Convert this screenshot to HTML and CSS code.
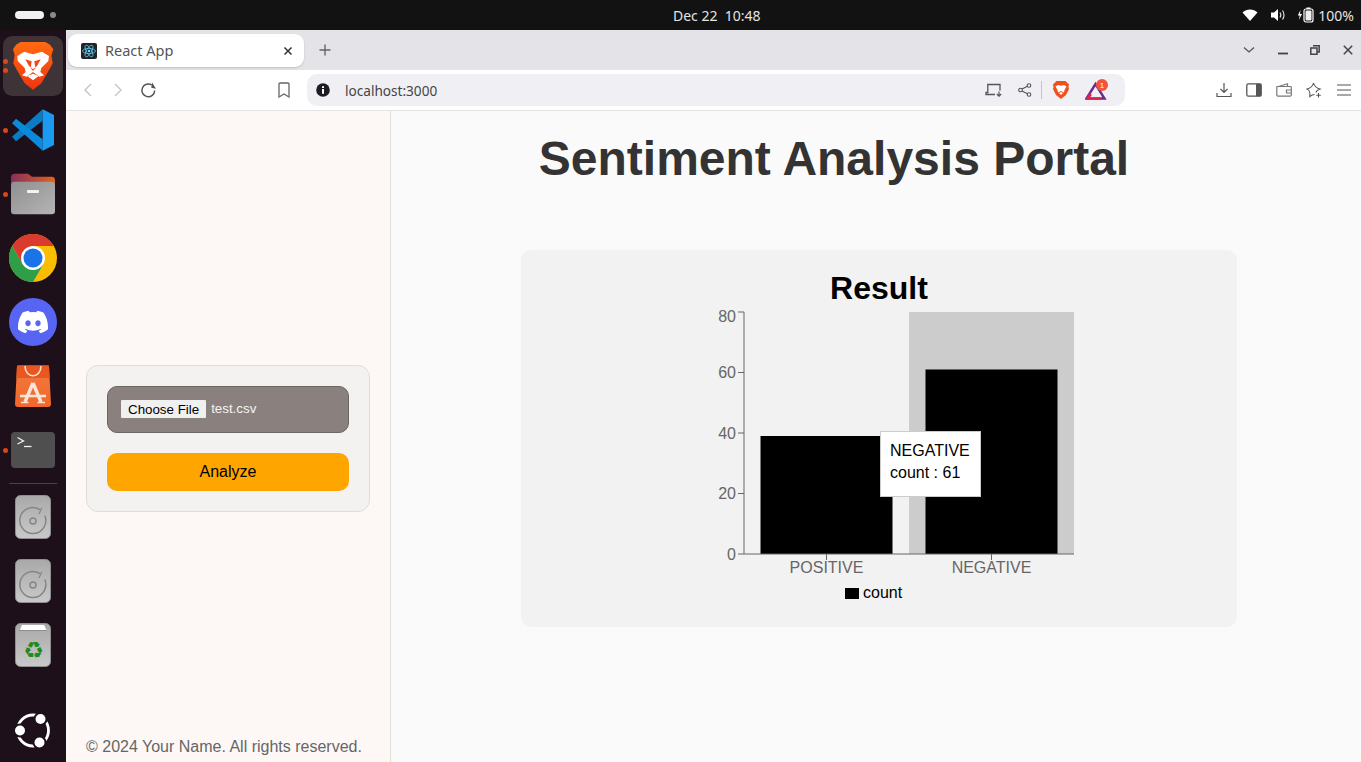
FILE: index.html
```html
<!DOCTYPE html>
<html lang="en">
<head>
<meta charset="utf-8">
<title>React App</title>
<link rel="stylesheet" href="styles.css">
</head>
<body>
<header class="topbar">
  <div class="activities"><span class="pill"></span><span class="wsdot"></span></div>
  <div class="clock">Dec 22&nbsp;&nbsp;10:48</div>
  <div class="status">
    <svg class="st-wifi" width="16" height="14" viewBox="0 0 16 14"><path d="M0.500 4.500C4.500 0.600 11.500 0.600 15.500 4.500L8 13Z" fill="#fff"/></svg>
    <svg class="st-vol" width="16" height="14" viewBox="0 0 16 14"><path d="M1 4.500H4L8 1V13L4 9.500H1Z" fill="#fff"/><path d="M10 4.500C11 6 11 8 10 9.500M12.500 2.500C14.500 5 14.500 9 12.500 11.500" fill="none" stroke="#ddd" stroke-width="1.200"/></svg>
    <svg class="st-bat" width="18" height="16" viewBox="0 0 18 16"><path d="M3.500 3L0.800 8.500H2.800L1.800 13L5 7H3Z" fill="#fff"/><rect x="7" y="2" width="9" height="13" rx="2" fill="none" stroke="#fff" stroke-width="1.200"/><rect x="9.500" y="0.500" width="4" height="1.500" fill="#fff"/><rect x="8.500" y="3.500" width="6" height="10" rx="1" fill="#eee"/></svg>
    <span class="pct">100%</span>
  </div>
</header>
<div class="desktop">
  <nav class="dock">
    <div class="slot slot-brave">
      <span class="dot dot-b1"></span><span class="dot dot-b2"></span>
      <svg width="60" height="60" viewBox="9 108 180 180">
        <defs><linearGradient id="bg1" x1="0" y1="0" x2="0" y2="1"><stop offset="0" stop-color="#ff6a10"/><stop offset="1" stop-color="#f0350f"/></linearGradient></defs>
        <rect x="9" y="108" width="180" height="180" rx="28" fill="#3e3437"/>
        <path d="M62 126H136L150 134L160 148L154 166L158 190L146 212L124 250L99 269L74 250L52 212L40 190L44 166L39 148L48 134Z" fill="url(#bg1)"/>
        <path d="M52 168L72 155L99 163L126 155L147 168L145 183L124 204L121 216L132 226L118 230L99 216L80 230L66 226L77 216L74 204L53 183Z" fill="#fff"/>
        <path d="M76 178L95 184L92 204L99 213L106 204L103 184L122 178L111 198L99 208L87 198Z" fill="#f4481a"/>
        <path d="M82 228L99 221L116 228L99 241Z" fill="#fff"/>
      </svg>
    </div>
    <div class="slot">
      <span class="dot"></span>
      <svg width="46" height="44" viewBox="33 324 132 132">
        <path d="M128 328L128 362L48 424L36 410Z" fill="#0b7bc4"/>
        <path d="M128 452L128 418L48 356L36 370Z" fill="#0a8ad8"/>
        <path d="M128 328L162 345V435L128 452Z" fill="#1a9bf0"/>
      </svg>
    </div>
    <div class="slot">
      <span class="dot"></span>
      <svg width="44" height="42" viewBox="33 519 132 126">
        <defs>
          <linearGradient id="fo" x1="0" x2="1"><stop offset="0" stop-color="#8a2f5c"/><stop offset="1" stop-color="#e0641f"/></linearGradient>
          <linearGradient id="fg" x1="0" y1="0" x2="1" y2="1"><stop offset="0" stop-color="#8f8f8f"/><stop offset="1" stop-color="#b5b5b5"/></linearGradient>
        </defs>
        <path d="M33 532Q33 521 44 521H84L96 530H155Q165 530 165 540V580H33Z" fill="url(#fo)"/>
        <rect x="33" y="545" width="132" height="98" rx="10" fill="url(#fg)"/>
        <rect x="81" y="570" width="36" height="9" rx="2" fill="#f2f2f2"/>
      </svg>
    </div>
    <div class="slot">
      <svg width="48" height="48" viewBox="0 0 48 48">
        <circle cx="24" cy="24" r="24" fill="#fbbc04"/>
        <path d="M3.200 12A24 24 0 0 1 44.800 12H24L13.600 30Z" fill="#db3a2e"/>
        <path d="M3.200 12L13.600 30H34.400L24 48A24 24 0 0 1 3.200 12Z" fill="#2f9e48"/>
        <circle cx="24" cy="24" r="12" fill="#fff"/>
        <circle cx="24" cy="24" r="9.500" fill="#1a73e8"/>
      </svg>
    </div>
    <div class="slot">
      <svg width="48" height="48" viewBox="0 0 48 48">
        <circle cx="24" cy="24" r="24" fill="#5865f2"/>
        <svg x="9" y="12.500" width="30" height="23" viewBox="0 0 127.140 96.360"><path fill="#fff" d="M107.700,8.070A105.150,105.150,0,0,0,81.470,0a72.060,72.060,0,0,0-3.360,6.830A97.680,97.680,0,0,0,49,6.830,72.370,72.370,0,0,0,45.640,0,105.890,105.890,0,0,0,19.390,8.090C2.790,32.650-1.710,56.600.54,80.210h0A105.730,105.730,0,0,0,32.710,96.360,77.700,77.700,0,0,0,39.600,85.250a68.420,68.420,0,0,1-10.850-5.180c.91-.66,1.800-1.340,2.660-2a75.570,75.570,0,0,0,64.320,0c.87.710,1.760,1.390,2.660,2a68.680,68.680,0,0,1-10.870,5.190,77,77,0,0,0,6.890,11.100A105.250,105.250,0,0,0,126.600,80.220h0C129.240,52.840,122.090,29.110,107.700,8.070ZM42.450,65.690C36.180,65.690,31,60,31,53s5-12.740,11.430-12.740S54,46,53.890,53,48.840,65.690,42.450,65.690Zm42.240,0C78.410,65.690,73.250,60,73.250,53s5-12.740,11.440-12.740S96.230,46,96.120,53,91.080,65.690,84.690,65.690Z"/></svg>
      </svg>
    </div>
    <div class="slot">
      <svg width="36" height="42" viewBox="0 0 36 42">
        <defs><linearGradient id="bag" x1="0" y1="0" x2="0" y2="1"><stop offset="0" stop-color="#f47a3f"/><stop offset="1" stop-color="#f0672a"/></linearGradient></defs>
        <path d="M2 2Q2 0.500 3.500 0.500H32.500Q34 0.500 34 2L36 39Q36 42 33 42H3Q0 42 0 39Z" fill="url(#bag)"/>
        <path d="M2 0.500H34L34.600 13H1.400Z" fill="#e9561f"/>
        <path d="M10 1C10 14 26 14 26 1" fill="none" stroke="#f7e3d8" stroke-width="1.600"/>
        <path d="M18 18L10 37M18 18L26 37" stroke="#f9e4d8" stroke-width="3.400" fill="none"/>
        <path d="M5 31H31" stroke="#f9e4d8" stroke-width="2.600"/>
        <path d="M6 37.500H13.500M22.500 37.500H30" stroke="#f9e4d8" stroke-width="1.600"/>
      </svg>
    </div>
    <div class="slot">
      <span class="dot"></span>
      <svg width="44" height="36" viewBox="0 0 44 36">
        <rect width="44" height="36" rx="4" fill="#4f4f4f"/>
        <path d="M6.500 5.500L12.500 9L6.500 12" fill="none" stroke="#f2f2f2" stroke-width="1.300"/>
        <path d="M13 14.500H20.500" stroke="#f2f2f2" stroke-width="1.300"/>
      </svg>
    </div>
    <div class="dock-sep"></div>
    <div class="slot">
      <svg width="36" height="44" viewBox="0 0 36 44">
        <defs><linearGradient id="dk" x1="0" y1="0" x2="0" y2="1"><stop offset="0" stop-color="#a9a9a9"/><stop offset="1" stop-color="#c9c9c9"/></linearGradient></defs>
        <rect x="0.500" y="0.500" width="35" height="43" rx="5" fill="url(#dk)" stroke="#8f8f8f"/>
        <path d="M25 14.700A13 13 0 1 0 29.800 20.500" fill="none" stroke="#858585" stroke-width="1.500"/>
        <path d="M26.700 13L24 19" stroke="#858585" stroke-width="1.200"/>
        <circle cx="18" cy="26" r="3" fill="none" stroke="#858585" stroke-width="1.500"/>
      </svg>
    </div>
    <div class="slot">
      <svg width="36" height="44" viewBox="0 0 36 44">
        <rect x="0.500" y="0.500" width="35" height="43" rx="5" fill="url(#dk)" stroke="#8f8f8f"/>
        <path d="M25 14.700A13 13 0 1 0 29.800 20.500" fill="none" stroke="#858585" stroke-width="1.500"/>
        <path d="M26.700 13L24 19" stroke="#858585" stroke-width="1.200"/>
        <circle cx="18" cy="26" r="3" fill="none" stroke="#858585" stroke-width="1.500"/>
      </svg>
    </div>
    <div class="slot slot-trash">
      <svg width="36" height="44" viewBox="0 0 36 44">
        <rect x="0.500" y="0.500" width="35" height="43" rx="5" fill="url(#dk)" stroke="#8f8f8f"/>
        <path d="M5 7L7 2H29L31.500 7Z" fill="#fff"/>
        <path d="M4 7.500H32" stroke="#8e8e8e" stroke-width="1"/>
      </svg>
      <span class="recycle">♻</span>
    </div>
    <div class="slot slot-ubuntu">
      <svg width="36" height="36" viewBox="0 0 36 36">
        <circle cx="18" cy="17.500" r="15.500" fill="none" stroke="#fff" stroke-width="2.800"/>
        <circle cx="25.500" cy="6" r="7" fill="#1d101b"/>
        <circle cx="5" cy="17.500" r="7" fill="#1d101b"/>
        <circle cx="24.500" cy="29.500" r="7" fill="#1d101b"/>
        <circle cx="25.500" cy="6" r="5" fill="#fff"/>
        <circle cx="5" cy="17.500" r="5" fill="#fff"/>
        <circle cx="24.500" cy="29.500" r="5" fill="#fff"/>
      </svg>
    </div>
  </nav>
  <div class="browser">
    <div class="tabstrip">
      <div class="tab">
        <svg class="favicon" width="16" height="16" viewBox="0 0 16 16">
          <rect width="16" height="16" rx="2" fill="#20232a"/>
          <g fill="none" stroke="#61dafb" stroke-width="0.700"><ellipse cx="8" cy="8" rx="6.500" ry="2.600"/><ellipse cx="8" cy="8" rx="6.500" ry="2.600" transform="rotate(60 8 8)"/><ellipse cx="8" cy="8" rx="6.500" ry="2.600" transform="rotate(120 8 8)"/></g>
          <circle cx="8" cy="8" r="1.300" fill="#61dafb"/>
        </svg>
        <span class="tab-title">React App</span>
        <svg class="tab-close" width="10" height="10" viewBox="0 0 10 10"><path d="M1.500 1.500L8.500 8.500M8.500 1.500L1.500 8.500" stroke="#333" stroke-width="1.500"/></svg>
      </div>
      <div class="newtab"><svg width="12" height="12" viewBox="0 0 12 12"><path d="M6 0.500V11.500M0.500 6H11.500" stroke="#666" stroke-width="1.400"/></svg></div>
      <div class="winctl">
        <div class="wbtn"><svg width="12" height="8" viewBox="0 0 12 8"><path d="M1 1.500L6 6L11 1.500" fill="none" stroke="#555" stroke-width="1.300"/></svg></div>
        <div class="wbtn wbtn-min"><svg width="10" height="10" viewBox="0 0 10 10"><path d="M0 8.500H10" stroke="#444" stroke-width="1.800"/></svg></div>
        <div class="wbtn"><svg width="10" height="10" viewBox="0 0 10 10"><path d="M3 0.800H9.200V7H7M0.800 3H7V9.200H0.800Z" fill="none" stroke="#444" stroke-width="1.500"/></svg></div>
        <div class="wbtn"><svg width="10" height="10" viewBox="0 0 10 10"><path d="M0.800 0.800L9.200 9.200M9.200 0.800L0.800 9.200" stroke="#444" stroke-width="1.500"/></svg></div>
      </div>
    </div>
    <div class="toolbar">
      <div class="tbtn"><svg width="10" height="14" viewBox="0 0 10 14"><path d="M8 1L2 7L8 13" fill="none" stroke="#c2c2c6" stroke-width="1.300"/></svg></div>
      <div class="tbtn"><svg width="10" height="14" viewBox="0 0 10 14"><path d="M2 1L8 7L2 13" fill="none" stroke="#c2c2c6" stroke-width="1.300"/></svg></div>
      <div class="tbtn"><svg width="17" height="17" viewBox="0 0 16 16"><path d="M13.800 8A6 6 0 1 1 11 2.800" fill="none" stroke="#555" stroke-width="1.400"/><path d="M11 0.500V5.500H15.500Z" fill="#555" transform="rotate(10 11 3)"/></svg></div>
      <div class="tbtn tbtn-book"><svg width="12" height="16" viewBox="0 0 12 16"><path d="M1 2Q1 1 2 1H10Q11 1 11 2V15L6 12L1 15Z" fill="none" stroke="#666" stroke-width="1.300"/></svg></div>
      <div class="urlbar">
        <svg width="14" height="14" viewBox="0 0 14 14"><circle cx="7" cy="7" r="6.800" fill="#1c1c22"/><rect x="6" y="6" width="2" height="4.800" fill="#fff"/><rect x="6" y="3.200" width="2" height="1.800" fill="#fff"/></svg>
        <span class="url">localhost:3000</span>
        <div class="url-actions">
          <svg class="ua-cast" width="18" height="14" viewBox="0 0 18 14"><path d="M10 11.500H1V9.500H2.800V1.500H15V7.500" fill="none" stroke="#555" stroke-width="1.300"/><path d="M14 8.500V13M11.800 11L14 13.200L16.200 11" fill="none" stroke="#555" stroke-width="1.200"/></svg>
          <svg class="ua-share" width="14" height="14" viewBox="0 0 14 14"><circle cx="2.500" cy="7" r="1.800" fill="none" stroke="#555" stroke-width="1.100"/><circle cx="11" cy="2.500" r="1.800" fill="none" stroke="#555" stroke-width="1.100"/><circle cx="11" cy="11.500" r="1.800" fill="none" stroke="#555" stroke-width="1.100"/><path d="M4 6L9.400 3.300M4 8L9.400 10.700" stroke="#555" stroke-width="1.100"/></svg>
          <span class="ua-sep"></span>
          <svg class="ua-brave" width="18" height="20" viewBox="0 0 18 20">
            <path d="M4.500 1H13.500L15.500 3L17 4.500L16.500 7L17 9L14 15L9 19L4 15L1 9L1.500 7L1 4.500L2.500 3Z" fill="#f0501c"/>
            <path d="M3.500 6.500L6 5L9 5.800L12 5L14.500 6.500L12.500 10L12 12.500L9 11L6 12.500L5.500 10Z" fill="#fff"/>
            <path d="M7 13L9 12L11 13L9 15Z" fill="#fff"/>
          </svg>
          <svg class="ua-bat" width="24" height="22" viewBox="0 0 24 22">
            <path d="M1.500 19.500L10.500 5L19.500 19.500Z" fill="none" stroke="#662d91" stroke-width="2.400"/>
            <path d="M0.500 20.800L5 13.500L6.800 16L5 18.800H16V20.800Z" fill="#e0234e"/>
            <circle cx="17" cy="6" r="6" fill="#f4523b"/>
            <text x="17" y="8.500" class="bat-num">1</text>
          </svg>
        </div>
      </div>
      <div class="tbtn"><svg width="16" height="16" viewBox="0 0 16 16"><path d="M8 1V10.500M4.500 7L8 10.500L11.500 7M1 11V14.500H15V11" fill="none" stroke="#555" stroke-width="1.200"/></svg></div>
      <div class="tbtn"><svg width="16" height="14" viewBox="0 0 16 14"><rect x="0.800" y="0.800" width="14.400" height="12.400" rx="1.500" fill="none" stroke="#555" stroke-width="1.300"/><rect x="10" y="0.800" width="5.200" height="12.400" fill="#555"/></svg></div>
      <div class="tbtn"><svg width="16" height="14" viewBox="0 0 16 14"><path d="M2.500 3.500L11.500 0.800V3.500M1 3.500H14.500Q15.300 3.500 15.300 4.300V12Q15.300 13.200 14 13.200H2Q0.800 13.200 0.800 12V4Z" fill="none" stroke="#777" stroke-width="1.200"/><path d="M15 7H10.500V10H15" fill="none" stroke="#777" stroke-width="1.200"/></svg></div>
      <div class="tbtn"><svg width="16" height="16" viewBox="0 0 16 16"><path d="M7.500 1C8.300 4.500 9.800 6 14 7C11.500 7.800 10.500 8.700 9.800 10.500M7.500 1C6.700 4.500 5.200 6 1 7C3.500 8 4.300 9.500 3.800 14.500C5.500 13.200 6.700 12.600 8.500 12.500" fill="none" stroke="#555" stroke-width="1.100"/><path d="M12.500 11V15.500M10.300 13.200H14.800" stroke="#555" stroke-width="1.100"/></svg></div>
      <div class="tbtn"><svg width="16" height="14" viewBox="0 0 16 14"><path d="M1 2H15M1 7H15M1 12H15" stroke="#555" stroke-width="1.200"/></svg></div>
    </div>
    <div class="page">
      <aside class="sidebar">
        <form class="upload">
          <div class="filefield"><span class="filebtn">Choose File</span><span class="filename">test.csv</span></div>
          <button type="button" class="analyze">Analyze</button>
        </form>
        <footer class="copy">© 2024 Your Name. All rights reserved.</footer>
      </aside>
      <main class="content">
        <h1 class="title">Sentiment Analysis Portal</h1>
        <section class="card">
          <h2 class="result">Result</h2>
          <div class="chart">
            <svg width="400" height="300" viewBox="0 0 400 300" class="chart-svg">
              <rect x="230" y="5" width="165" height="242" fill="#ccc"/>
              <rect x="81.500" y="129" width="132" height="118" fill="#000"/>
              <rect x="246.500" y="62.480" width="132" height="184.520" fill="#000"/>
              <g stroke="#666" fill="none">
                <path d="M65 5V247M65 247H395"/>
                <path d="M59 5H65M59 65.500H65M59 126H65M59 186.500H65M59 247H65"/>
                <path d="M147.500 247V253M312.500 247V253"/>
              </g>
              <g class="tick">
                <text x="57" y="14.500" class="tick-y">80</text>
                <text x="57" y="71" class="tick-y">60</text>
                <text x="57" y="132" class="tick-y">40</text>
                <text x="57" y="192" class="tick-y">20</text>
                <text x="57" y="253" class="tick-y">0</text>
                <text x="147.500" y="266" class="tick-x">POSITIVE</text>
                <text x="312.500" y="266" class="tick-x">NEGATIVE</text>
              </g>
              <rect x="166" y="281" width="14" height="11" fill="#000"/>
              <text x="184" y="291" class="legend">count</text>
            </svg>
            <div class="tooltip"><div>NEGATIVE</div><div>count : 61</div></div>
          </div>
        </section>
      </main>
    </div>
  </div>
</div>
</body>
</html>
```
FILE: styles.css
```css
* { box-sizing: border-box; }
html, body { margin: 0; height: 100%; overflow: hidden; }
body { width: 1361px; height: 762px; display: flex; flex-direction: column; font-family: "Liberation Sans", Arial, sans-serif; background: #fafafa; }

.topbar { height: 30px; flex: none; display: flex; align-items: center; background: #121212; color: #e4e4e4; font-family: "Noto Sans", sans-serif; font-size: 14px; }
.activities { display: flex; align-items: center; gap: 6px; padding-left: 15px; }
.pill { width: 29px; height: 8px; border-radius: 4px; background: #f2f2f2; }
.wsdot { width: 6px; height: 6px; border-radius: 50%; background: #8a8a8a; }
.clock { margin-left: 617px; white-space: nowrap; }
.status { margin-left: auto; display: flex; align-items: center; padding-right: 7px; }
.st-vol { margin-left: 12px; }
.st-bat { margin-left: 11px; }
.pct { margin-left: 3px; }

.desktop { flex: 1; display: flex; min-height: 0; }

.dock { width: 66px; flex: none; display: flex; flex-direction: column; padding-top: 4px; background: #1d101b; }
.slot { position: relative; height: 64px; flex: none; display: flex; align-items: center; justify-content: center; }
.slot > svg { display: block; }
.dot { position: absolute; left: 3px; top: 30px; width: 5px; height: 5px; border-radius: 50%; background: #d9481c; }
.dot-b1 { top: 25px; z-index: 1; }
.dot-b2 { top: 34px; z-index: 1; }
.dock-sep { height: 1px; margin: 1px 9px 1px; background: #4a3f48; flex: none; }
.slot-trash .recycle { position: absolute; left: 1px; right: 0; top: 25px; text-align: center; font-family: "DejaVu Sans", sans-serif; font-size: 23px; line-height: 24px; color: #1f8a1f; }
.slot-ubuntu { margin-top: auto; height: 62px; }

.browser { flex: 1; min-width: 0; display: flex; flex-direction: column; }

.tabstrip { height: 40px; flex: none; display: flex; align-items: flex-start; background: #e3e3e8; padding-left: 2px; }
.tab { width: 236px; height: 33px; margin-top: 4px; display: flex; align-items: center; padding: 0 11px 0 13px; border-radius: 9px; background: #fff; box-shadow: 0 1px 2px rgba(0,0,0,.15); }
.favicon { flex: none; }
.tab-title { margin-left: 8px; margin-bottom: 2px; font-family: "Noto Sans", sans-serif; font-size: 14.500px; color: #555; }
.tab-close { margin-left: auto; }
.newtab { width: 28px; height: 40px; margin-left: 7px; display: flex; align-items: center; justify-content: center; }
.winctl { margin-left: auto; display: flex; align-items: center; height: 40px; padding-right: 1px; gap: 9px; }
.wbtn { width: 24px; display: flex; justify-content: center; }
.wbtn-min { margin-left: 1px; margin-right: -1px; }

.toolbar { height: 41px; flex: none; display: flex; align-items: flex-start; padding: 4px 2px 0 7px; background: #fff; border-bottom: 1px solid #e3e3e6; }
.tbtn { width: 30px; height: 32px; flex: none; display: flex; align-items: center; justify-content: center; }
.tbtn-book { margin-left: 106px; }
.urlbar { width: 818px; height: 32px; flex: none; margin: 0 84px 0 8px; display: flex; align-items: center; padding: 0 16px 0 9px; border-radius: 10px; background: #f0f0f4; }
.url { margin-left: 15px; font-family: "Noto Sans", sans-serif; font-size: 13.600px; color: #444; }
.url-actions { margin-left: auto; display: flex; align-items: center; }
.ua-cast { margin-right: 0; }
.ua-share { margin-left: 15px; }
.ua-sep { width: 1px; height: 18px; margin: 0 10px 0 9px; background: #c4c4c8; }
.ua-brave { margin-right: 15px; }
.bat-num { font-size: 8px; fill: #fff; text-anchor: middle; font-family: "Liberation Sans", sans-serif; }

.page { flex: 1; min-height: 0; display: flex; }
.sidebar { width: 325px; flex: none; display: flex; flex-direction: column; padding: 254px 20px 5px; background: #fdf8f5; border-right: 1px solid #e2dedb; }
.upload { height: 147px; padding: 20px; display: flex; flex-direction: column; gap: 20px; background: #f4f2f0; border: 1px solid #e0dcd8; border-radius: 12px; }
.filefield { height: 47px; display: flex; align-items: center; padding: 0 0 2px 12px; background: #8a807d; border: 1px solid #6c6562; border-radius: 10px; font-size: 13.333px; }
.filebtn { padding: 2px 7px; height: 20px; line-height: 15px; background: #f0f0f0; border: 1px solid #8a807d; border-radius: 2px; color: #000; white-space: nowrap; }
.filename { margin-left: 4px; color: #f4f4f4; }
.analyze { height: 38px; border: 0; border-radius: 10px; background: #ffa500; font: 16px "Liberation Sans", Arial, sans-serif; color: #000; }
.copy { margin-top: auto; font-size: 16px; line-height: 20px; color: #666; white-space: nowrap; }

.content { flex: 1; min-width: 0; background: #fafafa; }
.title { margin: 0; padding: 20px 84px 0 0; font-size: 48px; line-height: 55px; font-weight: 700; color: #333; text-align: center; }
.card { width: 716px; height: 377px; margin: 64px 0 0 130px; padding-top: 20px; background: #f2f2f2; border-radius: 10px; }
.result { margin: 0; font-size: 32px; line-height: 37px; font-weight: 700; color: #000; text-align: center; }
.chart { position: relative; width: 400px; height: 300px; margin: 0 auto; }
.chart-svg { display: block; }
.tick-y { font-size: 16px; fill: #666; text-anchor: end; }
.tick-x { font-size: 16px; fill: #666; text-anchor: middle; }
.legend { font-size: 16px; fill: #000; }
.tooltip { position: absolute; left: 201px; top: 124px; width: 101px; height: 66px; padding: 8px 9px; background: #fff; border: 1px solid #ccc; font-size: 16px; line-height: 22px; color: #000; white-space: nowrap; }
```
